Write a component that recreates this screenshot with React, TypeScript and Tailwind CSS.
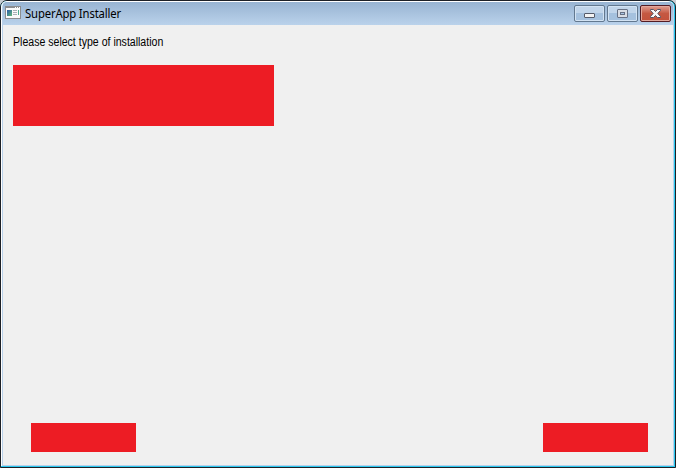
import React from "react";

function AppIcon() {
  return (
    <svg width="16" height="13" viewBox="0 0 16 13" shapeRendering="crispEdges" className="shrink-0">
      <defs>
        <linearGradient id="pane" x1="0" y1="0" x2="1" y2="1">
          <stop offset="0" stopColor="#2a5caa" />
          <stop offset="1" stopColor="#63b978" />
        </linearGradient>
      </defs>
      <rect width="16" height="13" fill="#8b8d90" />
      <rect x="1" y="2" width="14" height="10" fill="#fafafa" />
      <rect x="10" y="1" width="1" height="1" fill="#fff" />
      <rect x="12" y="1" width="1" height="1" fill="#fff" />
      <rect x="14" y="1" width="1" height="1" fill="#fff" />
      <rect x="2" y="4" width="5" height="6" fill="url(#pane)" />
      <rect x="8" y="4" width="4" height="1" fill="#a9b0b6" />
      <rect x="8" y="6" width="4" height="1" fill="#a9b0b6" />
      <rect x="8" y="8" width="4" height="1" fill="#a9b0b6" />
      <rect x="13" y="4" width="1" height="5" fill="#4cae91" />
    </svg>
  );
}

const caption =
  "flex h-[17px] w-[31px] items-center justify-center rounded-[2px] border border-[#62788f] bg-linear-to-b from-[#c1d5ea] from-45% to-[#a5c1de] to-50% shadow-[inset_0_0_0_1px_#d3e3f3]";

function TitleBar() {
  return (
    <header className="flex h-[23px] shrink-0 items-start bg-linear-to-b from-[#98b4d2] to-[#bad2eb] pl-[2px] pr-[2px]">
      <div className="mt-[4px] flex h-[14px] items-start gap-1">
        <AppIcon />
        <h1 className="mt-px origin-left scale-x-[0.94] whitespace-nowrap font-['Noto_Sans',sans-serif] text-[12px] leading-[14px] tracking-[-0.15px] text-black">
          SuperApp Installer
        </h1>
      </div>
      <div className="ml-auto mt-[3px] flex gap-[2px]">
        <button aria-label="Minimize" className={caption}>
          <svg width="13" height="11" viewBox="0 0 13 11">
            <rect x="1.5" y="5.5" width="10" height="4" rx="0.5" fill="#f3f3f3" stroke="#555b69" />
          </svg>
        </button>
        <button aria-label="Maximize" className={caption}>
          <svg width="11" height="9" viewBox="0 0 11 9">
            <rect x="0.5" y="0.5" width="10" height="8" rx="0.5" fill="#d9dde4" stroke="#687184" />
            <rect x="3.5" y="3.5" width="4" height="2" fill="#a9c4e2" stroke="#687184" />
          </svg>
        </button>
        <button
          aria-label="Close"
          className="flex h-[17px] w-[31px] items-center justify-center rounded-[2px] border border-[#531c24] bg-linear-to-b from-[#dc978a] from-5% via-[#c55842] via-50% to-[#c3513b] shadow-[inset_0_0_0_1px_#e3a79b]"
        >
          <svg width="11" height="9" viewBox="0 0 11 9">
            <path
              d="M.5.5h3L5.5 2.5 7.5.5h3v1L7.8 4.5l2.7 3v1h-3L5.5 6.5 3.5 8.5h-3v-1L3.2 4.5.5 1.5Z"
              fill="#f8f8f8"
              stroke="#555463"
            />
          </svg>
        </button>
      </div>
    </header>
  );
}

export default function App() {
  return (
    <div className="h-[468px] w-[676px] overflow-hidden bg-[#c8ced4]">
      <div className="h-full rounded-t-[7px] border border-[#1c2026] bg-[#28c8ef]">
        <div className="mr-px flex h-[465px] flex-col overflow-hidden rounded-t-[6px] border-l border-t border-white bg-[#b9d1ea] pb-px pl-px pr-px">
          <TitleBar />
          <main className="flex flex-1 flex-col items-start bg-[#f0f0f0] pl-[10px]">
            <p className="mt-[10px] h-[14px] origin-left scale-x-[0.88] whitespace-nowrap font-['Liberation_Sans',Arial,sans-serif] text-[12px] leading-[14px] text-black">
              Please select type of installation
            </p>
            <div className="mt-4 h-[61px] w-[261px] bg-[#ed1c24]" />
            <div className="mb-[13px] mt-auto flex w-full justify-between pl-[18px] pr-[25px]">
              <div className="h-[29px] w-[105px] bg-[#ed1c24]" />
              <div className="h-[29px] w-[105px] bg-[#ed1c24]" />
            </div>
          </main>
        </div>
      </div>
    </div>
  );
}
